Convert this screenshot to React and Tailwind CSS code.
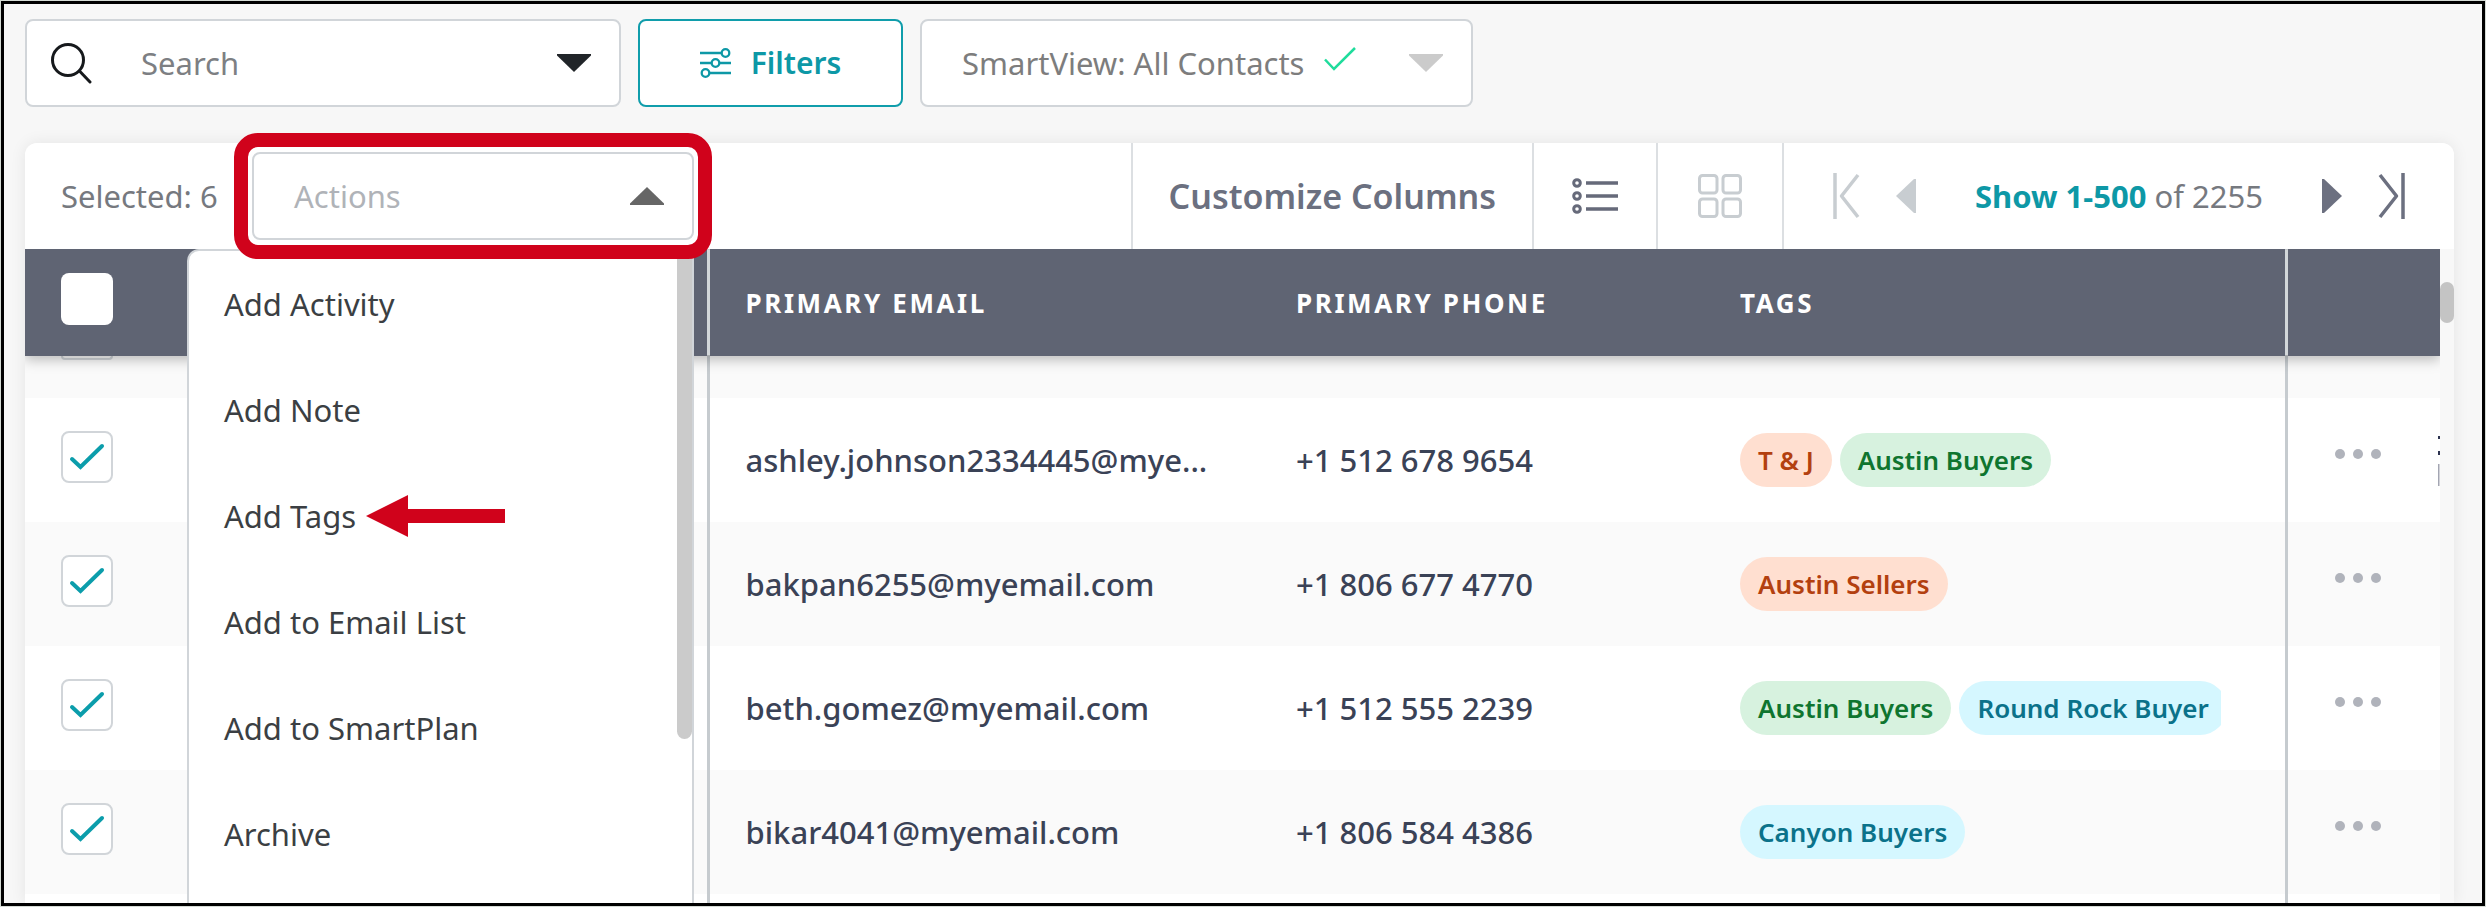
const contacts = [
  {
    email: "ashley.johnson2334445@mye...",
    phone: "+1 512 678 9654",
    tags: [
      { label: "T & J", color: "orange" },
      { label: "Austin Buyers", color: "green" },
    ],
  },
  {
    email: "bakpan6255@myemail.com",
    phone: "+1 806 677 4770",
    tags: [{ label: "Austin Sellers", color: "orange" }],
  },
  {
    email: "beth.gomez@myemail.com",
    phone: "+1 512 555 2239",
    tags: [
      { label: "Austin Buyers", color: "green" },
      { label: "Round Rock Buyer", color: "blue" },
    ],
  },
  {
    email: "bikar4041@myemail.com",
    phone: "+1 806 584 4386",
    tags: [{ label: "Canyon Buyers", color: "blue" }],
  },
];

const actions = [
  "Add Activity",
  "Add Note",
  "Add Tags",
  "Add to Email List",
  "Add to SmartPlan",
  "Archive",
];

const tagColors = {
  orange: "bg-[#ffdfd0] text-[#b3400f]",
  green: "bg-[#d7f2df] text-[#0f752f]",
  blue: "bg-[#d5f7ff] text-[#0b728a]",
};

export default function App() {
  return (
    <div className="h-screen bg-[#d5dbd5] p-px font-['Noto_Sans',sans-serif] text-[31px] leading-10 text-[#76797f]">
      <div className="flex h-full flex-col overflow-hidden border-3 border-black bg-[#f7f7f7] pr-7 pl-[21px]">
        <TopBar />
        <main className="mt-9 flex min-h-0 flex-1 flex-col rounded-t-xl bg-[#f8f8f8] shadow-[0_0_16px_rgba(0,0,0,0.08)]">
          <Toolbar />
          <div className="flex min-h-0 flex-1">
            <div className="min-w-0 flex-1 overflow-hidden">
              <ContactsTable />
            </div>
            <div className="w-[14px] shrink-0 pt-[33px]">
              <div className="h-[41px] rounded-full bg-[#c4c4c4]" />
            </div>
          </div>
        </main>
      </div>
    </div>
  );
}

function TopBar() {
  return (
    <div className="mt-[15px] flex h-22 shrink-0 gap-[17px]">
      <div className="flex w-[596px] items-center rounded-lg border-2 border-[#d1d5d9] bg-white pr-7 pl-6">
        <SearchIcon />
        <input
          type="text"
          aria-label="Search"
          placeholder="Search"
          className="ml-12 min-w-0 flex-1 bg-transparent outline-none placeholder:text-[#7d7f83]"
        />
        <Triangle className="h-[18px] w-[34px] rotate-180 text-[#212529]" />
      </div>
      <button className="flex w-[265px] items-center justify-center gap-5 rounded-lg border-2 border-[#109dab] bg-white text-[30px] font-semibold text-[#0d98a6]">
        <FiltersIcon />
        Filters
      </button>
      <button className="flex w-[553px] items-center rounded-lg border-2 border-[#d1d5d9] bg-white pr-7 pl-10 text-[#7d7d7d]">
        SmartView: All Contacts
        <svg viewBox="0 0 32 24" className="mb-2 ml-5 h-6 w-8" fill="none" stroke="#1fdc9c" strokeWidth="2.5">
          <path d="M1 12.500 10 22 31 1" />
        </svg>
        <Triangle className="ml-auto h-[18px] w-[34px] rotate-180 text-[#cbcbcb]" />
      </button>
    </div>
  );
}

function Toolbar() {
  return (
    <div className="relative z-10 flex h-[106px] shrink-0 items-stretch rounded-t-xl bg-white">
      <div className="flex flex-1 items-center pl-9">
        <span className="w-[191px]">Selected: 6</span>
        <ActionsSelect />
      </div>
      <button className="border-l-2 border-[#dcdfe2] px-9 text-[34px] font-semibold text-[#6b7080]">
        Customize Columns
      </button>
      <button aria-label="List view" className="flex w-[124px] items-center justify-center border-l-2 border-[#dcdfe2]">
        <ListIcon />
      </button>
      <button aria-label="Grid view" className="flex w-[128px] items-center justify-center border-x-2 border-[#dcdfe2]">
        <GridIcon />
      </button>
      <div className="flex w-[670px] items-center pr-12 pl-12">
        <button aria-label="First page">
          <FirstIcon className="h-12 w-7 text-[#c8cdd1]" />
        </button>
        <button aria-label="Previous page" className="ml-9">
          <ArrowIcon className="h-[34px] w-5 text-[#c8cdd1]" />
        </button>
        <p className="flex-1 text-center whitespace-nowrap">
          <a href="#range" className="font-bold text-[#0d98a6]">
            Show 1-500
          </a>{" "}
          of 2255
        </p>
        <button aria-label="Next page" className="mr-9">
          <ArrowIcon className="h-[34px] w-5 rotate-180 text-[#6c7080]" />
        </button>
        <button aria-label="Last page">
          <FirstIcon className="h-12 w-7 rotate-180 text-[#6c7080]" />
        </button>
      </div>
    </div>
  );
}

function ActionsSelect() {
  return (
    <div className="relative">
      <button className="flex h-22 w-[442px] items-center justify-between rounded-lg border-2 border-[#d1d5d9] bg-white pr-7 pl-10 text-[#b0b3b8]">
        Actions
        <Triangle className="h-[18px] w-[34px] text-[#666]" />
      </button>
      <div className="absolute top-[97px] right-0 flex h-[700px] w-[507px] overflow-hidden rounded-tl-xl border-2 border-[#d1d5d9] bg-white">
        <ul className="flex-1">
          {actions.map((action) => (
            <li key={action} className="h-[106px]">
              <button className="flex h-full w-full items-center gap-[10px] pl-[35px] text-[#3b3f43]">
                {action}
                {action === "Add Tags" && <PointerArrow />}
              </button>
            </li>
          ))}
        </ul>
        <div className="h-[488px] w-[15px] rounded-b-full bg-[#cbcbcb]" />
      </div>
      {/* red callout around the open select */}
      <div className="pointer-events-none absolute -inset-x-[18px] -inset-y-[19px] rounded-3xl border-14 border-[#d0021b]" />
    </div>
  );
}

function ContactsTable() {
  return (
    <table className="w-full table-fixed border-collapse text-left">
      <colgroup>
        <col className="w-[683px]" />
        <col className="w-[552px]" />
        <col className="w-[444px]" />
        <col />
        <col className="w-[154px]" />
      </colgroup>
      <thead>
        <tr className="relative h-[107px] bg-[#5f6473] text-[26px] tracking-widest text-white uppercase shadow-[0_4px_12px_rgba(0,0,0,0.25)]">
          <th className="border-r-3 border-[#d3d7da] pl-9">
            <input
              type="checkbox"
              aria-label="Select all"
              className="mb-2 block size-[52px] appearance-none rounded-lg bg-white"
            />
          </th>
          <th className="pl-9">Primary Email</th>
          <th className="pl-9">Primary Phone</th>
          <th className="pl-9">Tags</th>
          <th className="border-l-3 border-[#d3d7da]" aria-label="Options" />
        </tr>
      </thead>
      <tbody>
        {/* row scrolled almost out of view under the header */}
        <tr className="h-[42px] bg-[#fafafa]">
          <td className="border-r-3 border-[#c6cbcf] pl-9 align-top">
            <div className="h-1 w-[52px] rounded-b-lg border-2 border-t-0 border-[#d1d5d9]" />
          </td>
          <td colSpan={3} />
          <td className="border-l-3 border-[#c6cbcf]" />
        </tr>
        {contacts.map((contact, i) => (
          <ContactRow key={contact.email} contact={contact} overflowing={i === 0} />
        ))}
        <tr className="h-[124px] bg-white">
          <td className="border-r-3 border-[#c6cbcf]" />
          <td colSpan={3} />
          <td className="border-l-3 border-[#c6cbcf]" />
        </tr>
      </tbody>
    </table>
  );
}

function ContactRow({ contact, overflowing }) {
  return (
    <tr className="h-[124px] font-medium text-[#3a4256] even:bg-white odd:bg-[#fafafa]">
      <td className="border-r-3 border-[#c6cbcf] pl-9">
        <label className="relative mb-[6px] block size-[52px]">
          <input
            type="checkbox"
            defaultChecked
            aria-label={`Select ${contact.email}`}
            className="block size-full appearance-none rounded-lg border-2 border-[#d1d5d9] bg-white"
          />
          <svg
            viewBox="0 0 52 52"
            className="pointer-events-none absolute inset-0"
            fill="none"
            stroke="#0b9dab"
            strokeWidth="4"
            strokeLinecap="round"
          >
            <path d="M11 28 19.500 36 41 15" />
          </svg>
        </label>
      </td>
      <td className="pr-10 pl-9">
        <p className="truncate">{contact.email}</p>
      </td>
      <td className="pl-9">{contact.phone}</td>
      <td className="pr-16 pl-9">
        <div className="flex gap-2 overflow-hidden rounded-r-lg text-[26px] font-semibold">
          {contact.tags.map((tag) => (
            <span
              key={tag.label}
              className={`h-[54px] shrink-0 rounded-full px-[18px] leading-[54px] ${tagColors[tag.color]}`}
            >
              {tag.label}
            </span>
          ))}
        </div>
      </td>
      <td className="relative border-l-3 border-[#c6cbcf] pr-3">
        <button aria-label="More options" className="mx-auto mb-3 flex gap-2">
          <span className="size-[10px] rounded-full bg-[#b0b3bb]" />
          <span className="size-[10px] rounded-full bg-[#b0b3bb]" />
          <span className="size-[10px] rounded-full bg-[#b0b3bb]" />
        </button>
        {overflowing && <ClippedEdge />}
      </td>
    </tr>
  );
}

// edge of the content that runs past the last column
function ClippedEdge() {
  return (
    <svg viewBox="0 0 2 52" className="absolute top-9 right-0 h-[52px] w-[2px]">
      <path d="M0 2H2V5H0ZM0 17H2V21H0Z" fill="#2d3350" />
      <path d="M0 30H1.500V54H0Z" fill="#a3a5b2" />
    </svg>
  );
}

function Triangle({ className }) {
  return (
    <svg viewBox="0 0 34 18" className={className} fill="currentColor">
      <path d="M17 0 34 16.500V18H0V16.500Z" />
    </svg>
  );
}

function ArrowIcon({ className }) {
  return (
    <svg viewBox="0 0 20 34" className={className} fill="currentColor">
      <path d="M20 0V34H18L0 17 18 0Z" />
    </svg>
  );
}

function FirstIcon({ className }) {
  return (
    <svg viewBox="0 0 28 48" className={className} fill="none" stroke="currentColor" strokeWidth="3.500" strokeLinejoin="round">
      <path d="M3 1V47M26 3 9.500 24 26 45" />
    </svg>
  );
}

function SearchIcon() {
  return (
    <svg viewBox="0 0 42 42" className="size-[42px]" fill="none" stroke="#16191c" strokeWidth="3" strokeLinecap="round">
      <circle cx="17" cy="18" r="15.500" />
      <path d="M28.500 29 39 40" />
    </svg>
  );
}

function FiltersIcon() {
  return (
    <svg viewBox="0 0 31 30" className="h-[30px] w-[31px]" fill="none" stroke="currentColor" strokeWidth="2.300">
      <path d="M0 5H21M0 15H11M20 15H31M10 25H31" />
      <circle cx="25.500" cy="5" r="3.800" />
      <circle cx="15.500" cy="15" r="3.800" />
      <circle cx="5.500" cy="25" r="3.800" />
    </svg>
  );
}

function ListIcon() {
  return (
    <svg viewBox="0 0 46 36" className="h-9 w-[46px]" fill="none" stroke="#666a7a" strokeWidth="3">
      <path d="M14 5H46M14 18H46M14 31H46" strokeWidth="3.500" />
      <circle cx="5" cy="5" r="3.300" />
      <circle cx="5" cy="18" r="3.300" />
      <circle cx="5" cy="31" r="3.300" />
    </svg>
  );
}

function GridIcon() {
  return (
    <svg viewBox="0 0 44 44" className="size-11" fill="none" stroke="#c8cdd1" strokeWidth="3">
      <rect x="1.500" y="1.500" width="17.500" height="17.500" rx="3" />
      <rect x="25" y="1.500" width="17.500" height="17.500" rx="3" />
      <rect x="1.500" y="25" width="17.500" height="17.500" rx="3" />
      <rect x="25" y="25" width="17.500" height="17.500" rx="3" />
    </svg>
  );
}

function PointerArrow() {
  return (
    <svg viewBox="0 0 139 42" className="h-[42px] w-[139px]" fill="#d0021b">
      <path d="M0 21 42 0V14H139V28H42V42Z" />
    </svg>
  );
}
